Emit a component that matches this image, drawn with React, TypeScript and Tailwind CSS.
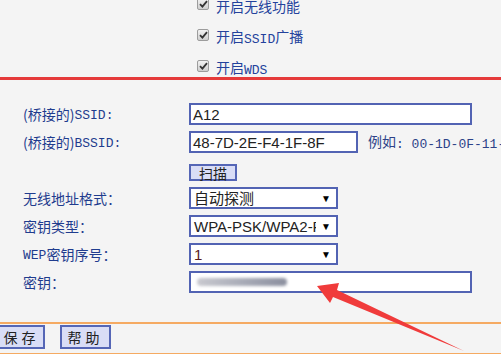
import React from "react";

const cjk = "font-['Noto_Sans_CJK_SC','Noto_Sans',sans-serif]";
const mono = "relative top-[1px] font-['Liberation_Mono','Noto_Sans_CJK_SC',monospace] text-[13px]";
const arial = "font-['Liberation_Sans','Noto_Sans_CJK_SC',sans-serif]";

function Check() {
  return (
    <span className="-mt-[4px] flex h-[12px] w-[12px] items-center justify-center rounded-[2px] border border-[#9c9c9c] bg-gradient-to-b from-[#f2f2f2] to-[#cfcfcf]">
      <svg width="9" height="8" viewBox="0 0 9 8">
        <path d="M1 4.2 L3.4 6.6 L8 1.2" fill="none" stroke="#333" strokeWidth="1.8" />
      </svg>
    </span>
  );
}

function CheckRow({ children }: { children: React.ReactNode }) {
  return (
    <div className="flex h-[31px] items-center gap-[7px] pl-[197px]">
      <Check />
      <span className={`${cjk} text-[14px] leading-none text-[#23429c]`}>{children}</span>
    </div>
  );
}

function Label({ children }: { children: React.ReactNode }) {
  return (
    <div className={`${cjk} flex items-center pl-[23px] text-[14px] leading-none text-[#1f3c8e]`}>
      {children}
    </div>
  );
}

function Select({ value, color = "text-[#222]" }: { value: string; color?: string }) {
  return (
    <div className="flex h-[22px] w-[149px] items-center border-2 border-[#5263b3] bg-white">
      <span className={`${arial} flex-1 overflow-hidden whitespace-nowrap pl-[3px] text-[15px] leading-none ${color}`}>
        {value}
      </span>
      <span className="w-[20px] text-center text-[10px] leading-none text-black">▼</span>
    </div>
  );
}

function Btn({ children, className = "" }: { children: React.ReactNode; className?: string }) {
  return (
    <div
      className={`${cjk} flex items-center justify-center border-2 border-[#5566b6] bg-[#d9ddf6] text-[14px] leading-none text-[#222] ${className}`}
    >
      {children}
    </div>
  );
}

export default function App() {
  return (
    <div className="relative h-[354px] w-[501px] overflow-hidden bg-[#f4f4f4]">
      <div className="h-[77px] overflow-hidden">
        <div className="-mt-[10px]">
          <CheckRow>开启无线功能</CheckRow>
          <CheckRow>
            开启<span className={mono}>SSID</span>广播
          </CheckRow>
          <CheckRow>
            开启<span className={mono}>WDS</span>
          </CheckRow>
        </div>
      </div>
      <div className="h-[3px] bg-[#e53a3a]" />

      <div className="grid grid-cols-[189px_1fr] gap-y-[6px] pt-[23px]">
        <Label>
          (桥接的)<span className={mono}>SSID:</span>
        </Label>
        <div className="flex h-[22px] w-[283px] items-center border-2 border-[#5263b3] bg-white">
          <span className={`${arial} pl-[2px] text-[15px] leading-none text-[#222]`}>A12</span>
        </div>

        <Label>
          (桥接的)<span className={mono}>BSSID:</span>
        </Label>
        <div className="flex items-center gap-[10px]">
          <div className="flex h-[22px] w-[169px] shrink-0 items-center border-2 border-[#5263b3] bg-white">
            <span className={`${arial} pl-[2px] text-[15px] leading-none text-[#222]`}>48-7D-2E-F4-1F-8F</span>
          </div>
          <span className={`${cjk} whitespace-nowrap text-[14px] leading-none text-[#2c4288]`}>
            例如<span className={mono}>: 00-1D-0F-11-22-33</span>
          </span>
        </div>

        <div />
        <div className="pt-[5px]">
          <Btn className="h-[17px] w-[48px]">扫描</Btn>
        </div>

        <Label>无线地址格式：</Label>
        <Select value="自动探测" />

        <Label>密钥类型：</Label>
        <Select value="WPA-PSK/WPA2-PSK" />

        <Label>
          <span className={mono}>WEP</span>密钥序号：
        </Label>
        <Select value="1" color="text-[#5a1a1a]" />

        <Label>密钥：</Label>
        <div className="flex h-[22px] w-[283px] items-center border-2 border-[#5263b3] bg-white pl-[6px]">
          <div className="h-[8px] w-[90px] rounded-sm bg-gradient-to-r from-[#c9c9cf] via-[#a9acb8] to-[#8b8f9e] blur-[1.5px]" />
        </div>
      </div>

      <div className="mt-[29px] h-[2px] bg-[#f5aa62]" />
      <div className="flex h-[29px] items-start gap-[15px] pt-[1px]">
        <Btn className="-ml-[2px] h-[24px] w-[47px] tracking-[4px]">保存</Btn>
        <Btn className="h-[24px] w-[51px] tracking-[4px]">帮助</Btn>
      </div>
      <div className="h-[2px] bg-[#f5aa62]" />

      <svg className="pointer-events-none absolute left-0 top-0" width="501" height="354" viewBox="0 0 501 354">
        <polygon
          points="317,286 339,283 337,290 464,351 333,297 330,303"
          fill="#f03b3b"
        />
      </svg>
    </div>
  );
}
